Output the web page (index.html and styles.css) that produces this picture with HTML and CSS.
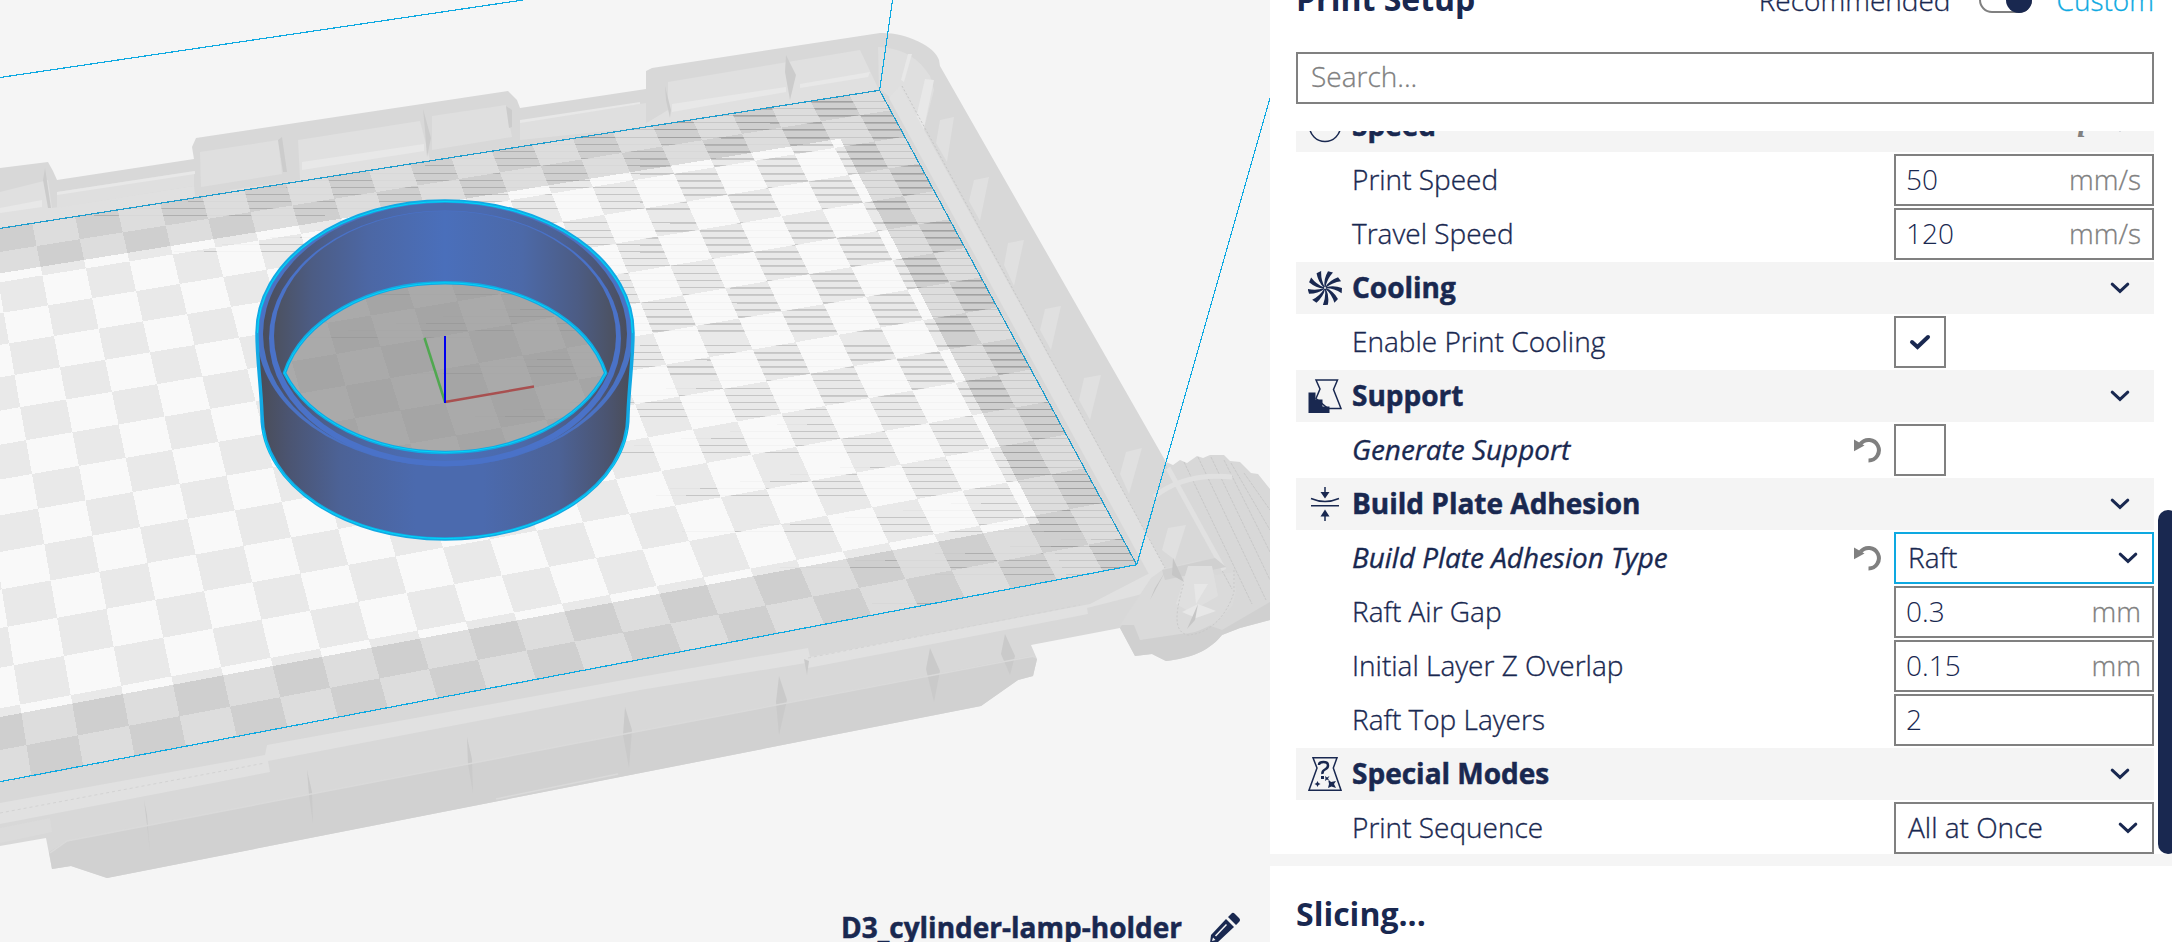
FILE: index.html
```html
<!DOCTYPE html>
<html lang="en">
<head>
<meta charset="utf-8">
<title>Print Setup</title>
<link rel="stylesheet" href="styles.css">
</head>
<body>
<svg class="defs" width="0" height="0" aria-hidden="true">
  <symbol id="chevron" viewBox="0 0 20 12"><path d="M2.2 2.2 10 9.4 17.8 2.2" fill="none" stroke="#192850" stroke-width="3" stroke-linecap="round"/></symbol>
  <symbol id="reset" viewBox="0 0 28 28"><path d="M6.5 7.8A10.3 10.3 0 1 1 14.5 24.5" fill="none" stroke="#808080" stroke-width="4"/><path d="M0 3.5 10.5 9.5 0 15.2Z" fill="#808080"/></symbol>
</svg>
<div class="app">
  <main class="stage">
    <svg class="scene" width="1270" height="942" viewBox="0 0 1270 942">
      <defs>
        <linearGradient id="outer" x1="257" x2="634" y1="0" y2="0" gradientUnits="userSpaceOnUse">
          <stop offset="0" stop-color="#4a4c55"/><stop offset=".08" stop-color="#4b5470"/><stop offset=".22" stop-color="#4c6296"/><stop offset=".42" stop-color="#4b6aae"/><stop offset=".6" stop-color="#4b6aae"/><stop offset=".8" stop-color="#4c6296"/><stop offset=".93" stop-color="#4b5470"/><stop offset="1" stop-color="#4a4c55"/>
        </linearGradient>
        <linearGradient id="inner" x1="270" x2="620" y1="0" y2="0" gradientUnits="userSpaceOnUse">
          <stop offset="0" stop-color="#4c505c"/><stop offset=".12" stop-color="#4c5c84"/><stop offset=".28" stop-color="#4c67a4"/><stop offset=".5" stop-color="#4a6fbb"/><stop offset=".72" stop-color="#4c69a8"/><stop offset=".88" stop-color="#4c5c84"/><stop offset="1" stop-color="#4c505c"/>
        </linearGradient>
        <clipPath id="plate"><path d="M-60 238 879.6 90.3 1136.7 564.7-60 794.5Z"/></clipPath>
        <clipPath id="darkCells"><path id="darkClip"/></clipPath>
        <clipPath id="ringHole"><path clip-rule="evenodd" d="M0 0H1270V942H0ZM284.500 373A165 117 0 0 1 605.700 373A171 121 0 0 1 284.500 373Z"/></clipPath>
      </defs>
      <g id="frame">
        <path fill="#d8d8d8" d="M0 168 48 162 53 171 57 180 194 159 192 147 196 138 508 91 517 100 520 108 646 89 646 71 652 68 880 33C905 32 935 46 939 60L940 66 1166 462 1173 465 1180 460 1187 463 1197 456 1203 458 1210 455 1224 455 1230 461 1240 462 1251 473 1258 474 1270 489V620L1240 628 1222 635C1208 652 1190 658 1166 661L1152 654 1135 656 1120 628 1031 645 1037 659 1033 676 1018 680 981 706 107 878 71 866 52 869 46 838 0 846Z"/>
        <path fill="#e0e0e0" d="M0 192 48 180 52 208 194 186 196 205 230 199 230 190 300 180 298 140 420 121 430 160 520 146 640 127 668 110 668 82 860 50 879 90 0 228Z"/>
        <path fill="#dfdfdf" d="M200 152 278 140 282 174 201 187ZM432 116 506 105 512 137 432 150ZM57 192 194 171V186L57 208ZM520 122 646 103V127L520 140Z"/>
        <path fill="#cccccc" d="M278 140 283 172 287 172 282 137ZM423 109 431 138 427 157 425 130ZM506 106 509 128 512 127 512 110ZM45 168 51 208 48 208 43 180ZM786 55 796 75 790 100 785 72ZM665 86 671 110 670 118 666 100Z"/>
        <path fill="#e8e8e8" d="M0 213 42 207V200L0 208ZM57 192 195 171V174L57 195ZM302 162 424 144V151L302 170ZM520 120 640 102V104L520 123ZM672 104 786 87V92L672 112ZM800 84 870 72 868 77 800 88Z"/>
        <path fill="#dfdfdf" d="M878 47C905 48 920 60 930 76L934 90 921 140 905 110 879 88Z"/>
        <path fill="#e8e8e8" d="M925 79 934 80 921 142 912 135ZM908 54 901 80 904 82 912 54Z"/>
        <path fill="#e1e1e1" d="M889 98 900 86 1165 568 1151 578Z"/>
        <path fill="none" stroke="#c6c6c6" stroke-dasharray="2 2" d="M902 86 1165 568"/>
        <g fill="#e0e0e0"><path d="M940 120 954 117 947 162 936 143Z"/><path d="M974 180 989 177 980 221 969 201Z"/><path d="M1008 243 1024 240 1014 286 1004 265Z"/><path d="M1045 309 1061 306 1051 350 1040 330Z"/><path d="M1084 378 1101 375 1090 420 1079 400Z"/><path d="M1126 452 1142 448 1129 494 1120 474Z"/><path d="M1168 528 1186 525 1175 560 1162 550Z"/></g>
        <path fill="#d1d1d1" d="M67 841 640 731 1030 656 1037 659 1033 676 1018 680 981 706 107 878 71 866 52 869 49 852Z"/>
        <path fill="#e1e1e1" d="M0 803 265 755 267 745 640 677 808 648 810 657 1090 604 1148 574 1164 568 1150 592 1087 608 1088 614 808 668 806 663 640 690 268 761 270 772 0 824Z"/>
        <path fill="#dbdbdb" d="M0 843V828L50 818 52 832Z"/>
        <path fill="none" stroke="#d3d3d3" stroke-dasharray="3 3" d="M0 813 265 763M808 658 1080 605"/>
        <path fill="#cacaca" d="M307 770 312 792 313 824 309 795ZM467 737 472 759 473 793 468 764ZM625 707 632 730 629 768 623 735ZM779 676 787 700 779 735 776 702ZM930 648 940 671 934 702 926 669ZM1005 634 1015 656 1010 675 1001 654ZM144 800 147 815 150 852 147 825ZM804 659 809 661 807 675Z"/>
        <path fill="none" stroke="#dadada" stroke-width="1.500" d="M496 799 618 774M50 853 67 841 640 731 1034 656"/>
        <path fill="#d0d0d0" d="M1132 610 1140 640 1200 622 1222 630 1270 602V620L1240 628 1222 635C1208 652 1190 658 1166 661L1152 654 1135 656 1120 628Z"/>
        <path fill="#dadada" d="M1151 578 1165 568 1200 560 1215 575 1234 572 1236 590 1232 606C1220 622 1200 634 1180 634L1140 640 1134 625 1120 625Z"/>
        <path fill="none" stroke="#c8c8c8" stroke-dasharray="3 1" d="M1165 465 1232 589M1184 462 1252 604M1198 457 1266 600M1211 457 1270 580M1224 460 1270 552M1231 463 1270 530M1244 473 1270 510"/>
        <path fill="none" stroke="#e1e1e1" stroke-width="5" d="M1168 468 1224 570M1154 497C1175 480 1200 474 1232 477"/>
        <path fill="#d0d0d0" d="M1162 570 1215 558 1226 567 1165 580Z"/>
        <path fill="#dfdfdf" d="M1176 604 1188 566 1212 566 1218 596 1190 612Z"/>
        <path fill="#e7e7e7" d="M1194 584 1208 584 1196 604ZM1182 612 1198 604 1216 611 1196 618Z"/>
        <path fill="#c6c6c6" d="M1165 572 1150 600 1155 588ZM1173 558 1184 582 1172 575ZM1198 604 1195 620 1187 629Z"/>
        <path fill="none" stroke="#c9c9c9" stroke-dasharray="2 2" d="M1234 570V592C1226 618 1208 634 1188 635 1172 632 1176 610 1184 582"/>
      </g>
      <g clip-path="url(#plate)" shape-rendering="crispEdges">
        <path fill="#f9f9f9" d="M-60 238 879.6 90.3 1136.7 564.7-60 794.5Z"/>
        <path id="cells" fill="#e9e9e9"/>
        <path id="faint" fill="#000" fill-opacity=".025"/>
        <path id="streaks" fill="#000" fill-opacity=".13" clip-path="url(#darkCells)"/>
        <path id="border" fill="#000" fill-opacity=".108" fill-rule="evenodd"/>
        <path id="borderStreaks" fill="#000" fill-opacity=".08"/>
      </g>
      <path fill="#8a8a8a" fill-opacity=".72" d="M284.500 373A165 117 0 0 1 605.700 373A171 121 0 0 1 284.500 373Z"/>
      <g fill="none" stroke="#0ea9e1" stroke-width="1.2" shape-rendering="crispEdges">
        <path stroke="#209dcd" d="M0 228.4 879.6 90.3 1136.7 564.7"/>
        <path d="M0 781.7 1136.7 564.7 1270 98M0 77.5 523 0M879.6 90.3 892.5 0"/>
      </g>
      <g clip-path="url(#ringHole)">
        <path fill="url(#outer)" d="M257 333C257 360 261 385 262 415 262 485 345 540 445 540S628 485 628 415C629 385 633 360 633 333Z"/>
        <ellipse cx="445" cy="333" rx="188" ry="133" fill="#4a72c4"/>
        <ellipse cx="445" cy="334" rx="182" ry="131" fill="url(#outer)"/>
        <ellipse cx="445" cy="338.500" rx="176" ry="128" fill="#4a72c8"/>
        <ellipse cx="445" cy="336" rx="171" ry="125" fill="url(#inner)"/>
        <path fill="none" stroke="#12a9e4" stroke-width="3.5" d="M257 333A188 132 0 0 1 633 333C633 360 629 385 628 415 628 485 545 539 445 539S262 485 262 415C261 385 257 360 257 333Z"/>
        <path fill="none" stroke="#00d8fa" stroke-width="1" d="M257.500 333A187.500 131.500 0 0 1 632.500 333M263 430C272 490 350 538.500 445 538.500S618 490 627 430"/>
      </g>
      <path fill="none" stroke="#12a9e4" stroke-width="3.5" d="M284.500 373A165 117 0 0 1 605.700 373A171 121 0 0 1 284.500 373Z"/>
      <path fill="none" stroke="#00d8fa" stroke-width="1" d="M284.500 373A165 117 0 0 1 605.700 373A171 121 0 0 1 284.500 373Z"/>
      <g fill="none" stroke-width="2.500"><path stroke="#a85050" d="M445 402 534 386.500"/><path stroke="#50a850" d="M445 402 424.500 338"/><path stroke="#0000f0" stroke-width="2" d="M445 403V336"/></g>
    </svg>
    <div class="job">
      <span class="job-name">D3_cylinder-lamp-holder</span>
      <svg width="32" height="32" viewBox="0 0 32 32"><path fill="#192850" d="M1 31 2 23 17 7 25 15 9 30ZM19 5 22.500 1.500Q24 0 26 2L30 6Q32 8 30 10L27 13Z"/><path d="M6.500 24 17.500 12.500" stroke="#f5f5f5" stroke-width="1.500"/><path fill="#f5f5f5" d="M3 29 4 25.500 6.500 28Z"/></svg>
    </div>
  </main>
  <aside class="panel">
    <section class="setup">
      <header class="setup-head">
        <h2 class="setup-title">Print Setup</h2>
        <span class="mode">Recommended</span>
        <span class="switch"><i class="knob"></i></span>
        <span class="mode mode-on">Custom</span>
      </header>
      <div class="search">Search...</div>
      <div class="list">
        <div class="rows">
          <div class="group"><svg class="gicon" viewBox="0 0 34 34"><circle cx="17" cy="17" r="15.500" fill="none" stroke="#192850" stroke-width="1.500"/></svg><b>Speed</b><i class="info">i</i><svg class="chev"><use href="#chevron"/></svg></div>
          <div class="row"><span class="label">Print Speed</span><div class="field"><span>50</span><em>mm/s</em></div></div>
          <div class="row"><span class="label">Travel Speed</span><div class="field"><span>120</span><em>mm/s</em></div></div>
          <div class="group"><svg class="gicon" viewBox="0 0 34 34"><g id="fan" fill="#192850"></g></svg><b>Cooling</b><svg class="chev"><use href="#chevron"/></svg></div>
          <div class="row"><span class="label">Enable Print Cooling</span><div class="check"><svg width="22" height="18" viewBox="0 0 22 18"><path d="M3 9 8.500 14 19 4" fill="none" stroke="#192850" stroke-width="4" stroke-linecap="round"/></svg></div></div>
          <div class="group"><svg class="gicon" viewBox="0 0 34 34"><path d="M8 1H29.500L25.500 10.500 33 29.500H20L8 19.500 12 10Z" fill="none" stroke="#192850" stroke-width="1.500"/><path fill="#192850" d="M.5 13.500H7.500V20.500H14.500V27.500H21.500V34H.5Z"/></svg><b>Support</b><svg class="chev"><use href="#chevron"/></svg></div>
          <div class="row"><span class="label changed">Generate Support</span><svg class="reset"><use href="#reset"/></svg><div class="check"></div></div>
          <div class="group"><svg class="gicon" viewBox="0 0 34 34"><g fill="none" stroke="#192850" stroke-width="1.500"><path d="M17 0V8M17 34V26M3 18.700H31M3 11.500Q17 17.500 31 11.500"/></g><path fill="#192850" d="M12.500 5H21.500L17 11.500ZM12.500 29.500H21.500L17 22.500Z"/></svg><b>Build Plate Adhesion</b><svg class="chev"><use href="#chevron"/></svg></div>
          <div class="row"><span class="label changed">Build Plate Adhesion Type</span><svg class="reset"><use href="#reset"/></svg><div class="field pick active"><span>Raft</span><svg class="chev"><use href="#chevron"/></svg></div></div>
          <div class="row"><span class="label">Raft Air Gap</span><div class="field"><span>0.3</span><em>mm</em></div></div>
          <div class="row"><span class="label">Initial Layer Z Overlap</span><div class="field"><span>0.15</span><em>mm</em></div></div>
          <div class="row"><span class="label">Raft Top Layers</span><div class="field"><span>2</span></div></div>
          <div class="group"><svg class="gicon" viewBox="0 0 34 34"><g fill="none" stroke="#192850"><path stroke-width="1.500" d="M5 .8H29L25.300 11 33 33.200H1L9 11Z"/><path stroke-width="2.500" d="M11 8Q11 5 15.500 5T20 8.500Q20 11 17 12.500T14.500 17"/></g><path fill="#192850" d="M13 19H16V22H13ZM17 19 19 20.500 21.500 19 20 21.500 21.500 24 19 22.500 17 24 17.500 21.500ZM9.500 24 10.500 26 12.500 27 10.500 28 9.500 30 8.500 28 6.500 27 8.500 26ZM20 22 23 25 28 24 26 27 28 31 23.500 29.500 20 31 21 27Z"/></svg><b>Special Modes</b><svg class="chev"><use href="#chevron"/></svg></div>
          <div class="row"><span class="label">Print Sequence</span><div class="field pick"><span>All at Once</span><svg class="chev"><use href="#chevron"/></svg></div></div>
        </div>
        <div class="scrollbar"></div>
      </div>
    </section>
    <section class="action">Slicing...</section>
  </aside>
</div>
<script src="scene.js"></script>
</body>
</html>
```

FILE: styles.css
```css
* { box-sizing: border-box; }
body { margin: 0; width: 2172px; height: 942px; overflow: hidden; background: #f5f5f5; color: #192850; font: 300 28px "Open Sans", "Noto Sans", sans-serif; }
.defs { position: absolute; }
.app { display: flex; height: 942px; }
.stage { position: relative; width: 1270px; height: 942px; overflow: hidden; flex: none; }
.scene { display: block; }
.job { position: absolute; right: 29px; top: 907px; display: flex; gap: 27px; align-items: flex-start; line-height: 40px; }
.job svg { margin-top: 5px; }
.job-name { font-size: 28px; font-weight: 700; -webkit-text-stroke: .5px #192850; }
.panel { width: 902px; display: flex; flex-direction: column; gap: 12px; overflow: hidden; }
.setup { height: 854px; background: #fff; padding-left: 26px; overflow: hidden; }
.setup-head { display: flex; align-items: center; width: 858px; height: 44px; margin-top: -22px; line-height: 44px; }
.setup-title { margin: 0 auto 0 0; font-size: 32px; font-weight: 700; line-height: 40px; padding-bottom: 3px; }
.mode { -webkit-text-stroke: .3px; }
.switch { display: flex; justify-content: flex-end; width: 53px; height: 26px; margin: 0 25px 0 28px; border: 2px solid #808080; border-radius: 13px; background: #fff; }
.knob { width: 26px; height: 26px; margin: -2px; border-radius: 50%; background: #192850; }
.mode-on { color: #0ea9e1; }
.search { width: 858px; height: 52px; margin-top: 30px; padding-left: 13px; border: 2px solid #808080; line-height: 45px; color: #808080; -webkit-text-stroke: .3px; }
.list { position: relative; height: 723px; margin-top: 27px; overflow: hidden; display: flex; gap: 4px; align-items: flex-start; }
.rows { display: grid; gap: 2px; width: 858px; flex: none; margin-top: -31px; }
.group, .row { display: flex; align-items: center; height: 52px; }
.group { background: #f4f4f4; padding: 0 24px 0 12px; }
.group b { margin: 0 auto 0 10px; padding-bottom: 2px; font-size: 28px; font-weight: 700; -webkit-text-stroke: .5px #192850; }
.gicon { width: 34px; height: 34px; }
.chev { width: 20px; height: 12px; }
.info { margin-right: 24px; color: #808080; font: italic 700 32px "Liberation Serif", serif; }
.label { padding: 0 0 2px 56px; margin-right: auto; -webkit-text-stroke: .35px; }
.changed { font-size: 27.9px; font-style: italic; font-weight: 500; }
.reset { width: 28px; height: 28px; margin-right: 12px; }
.field { display: flex; justify-content: space-between; align-items: center; width: 260px; height: 52px; padding: 0 11px 0 10px; border: 2px solid #808080; background: #fff; line-height: 44px; }
.field span, .field em { padding-bottom: 2px; }
.field em { font-style: normal; color: #808080; -webkit-text-stroke: .3px; }
.pick { padding: 0 14px 0 12px; -webkit-text-stroke: .35px; }
.active { border-color: #0ea9e1; }
.check { display: flex; align-items: center; justify-content: center; width: 52px; height: 52px; margin-right: 208px; border: 2px solid #808080; }
.scrollbar { width: 20px; height: 344px; flex: none; margin-top: 379px; border-radius: 10px; background: #192850; }
.action { height: 76px; background: #fff; padding: 26px 0 0 26px; font-size: 32px; font-weight: 700; line-height: 44px; }
```

FILE: scene.js
```js
// Grid corners of the build plate: column, row, screen x, screen y.
const anchors = [
  [0, 1, 8.2, 626.7], [13, 1, 629.4, 513.7], [0, 0, 2, 589.3], [7, 0, 338.8, 529.3],
  [14, 4, 717.7, 614.7], [18, 4, 905.3, 579], [22, 4, 1088.7, 544.3], [0, 4, 25.7, 745.3],
  [2, -10, 36.7, 246], [6, -10, 208.3, 218.7], [2, -8, 47.7, 305.3], [6, -8, 223, 277.3],
  [18, -10, 701.2, 139.3], [20, -10, 781.6, 127.7], [22, -10, 860.8, 116], [1, -4, 26.1, 440]
];

// Least-squares homography through normal equations.
const M = Array.from({ length: 8 }, () => new Array(9).fill(0));
function addRow(r) {
  for (let a = 0; a < 8; a++) for (let b = 0; b < 9; b++) M[a][b] += r[a] * r[b];
}
for (const [u, v, x, y] of anchors) {
  addRow([u, v, 1, 0, 0, 0, -u * x, -v * x, x]);
  addRow([0, 0, 0, u, v, 1, -u * y, -v * y, y]);
}
for (let c = 0; c < 8; c++) {
  let p = c;
  for (let r = c; r < 8; r++) if (Math.abs(M[r][c]) > Math.abs(M[p][c])) p = r;
  [M[c], M[p]] = [M[p], M[c]];
  for (let r = 0; r < 8; r++) {
    if (r === c) continue;
    const f = M[r][c] / M[c][c];
    for (let k = c; k < 9; k++) M[r][k] -= f * M[c][k];
  }
}
const h = M.map((r, i) => r[8] / r[i]);
function pt(u, v) {
  const w = h[6] * u + h[7] * v + 1;
  return ((h[0] * u + h[1] * v + h[2]) / w).toFixed(1) + " " + ((h[3] * u + h[4] * v + h[5]) / w).toFixed(1);
}
const quad = (a, b, c, d) => `M${pt(a, b)}L${pt(c, b)}L${pt(c, d)}L${pt(a, d)}Z`;
const set = (id, d) => document.getElementById(id).setAttribute("d", d);

let cells = "";
for (let i = -2; i < 24; i++)
  for (let j = -12; j < 6; j++)
    if ((i + j) % 2 === 0) cells += quad(i, j, i + 1, j + 1);
set("cells", cells);
set("darkClip", cells);
set("border", quad(-3, -11, 23, 5) + quad(-4, -9.29, 21.24, 3.21));

// Horizontal streaks over the plate: y, left end, optional right end.
const lines = [
  [101, 500], [108, 500], [115, 500], [122, 600], [129, 600], [137, 551], [144, 535], [151, 500], [158, 460], [165, 425], [173, 375],
  [180, 328], [187, 286], [194, 235], [201, 188], [208, 141], [215, 94, 325], [222, 500], [230, 347], [237, 300],
  [244, 252], [251, 204], [258, 580], [265, 570], [273, 560], [280, 560], [287, 560], [294, 360], [302, 567],
  [309, 520], [316, 473], [323, 426], [330, 378], [337, 331, 470], [345, 640], [352, 583], [359, 537], [366, 490],
  [373, 443], [380, 740], [388, 696], [395, 650], [402, 600], [409, 553], [416, 505], [424, 807], [431, 760],
  [438, 711], [445, 664], [452, 612], [460, 946], [467, 870], [474, 820], [481, 770], [488, 700], [495, 686],
  [503, 981], [510, 933], [517, 875], [524, 790], [531, 712], [539, 1091], [546, 1040], [553, 965], [560, 885],
  [567, 810], [574, 965], [603, 902, 930]
];
// Right boundary of the printable area; beyond it the streaks cross every cell.
const [ax, ay] = pt(21.24, -9.29).split(" ").map(Number);
const [bx, by] = pt(21.24, 3.21).split(" ").map(Number);
let strong = "", faint = "", margin = "";
for (const [y, x, end = 1140] of lines) {
  strong += `M${x} ${y}H${end}v1H${x}Z`;
  faint += `M${x - 30} ${y}H${end}v1H${x - 30}Z`;
  if (end !== 1140) continue;
  const wide = Math.max(x + 170, 640);
  if (y < 400) strong += `M${wide} ${y + 1}H1140v1H${wide}Z`;
  const left = Math.max(x, y < ay ? x : ax + (bx - ax) * (y - ay) / (by - ay)).toFixed(0);
  margin += `M${left} ${y}H1140v1H${left}Z`;
}
set("streaks", strong);
set("faint", faint);
set("borderStreaks", margin);

// Fan blades of the cooling icon.
let blades = "";
for (let a = 0; a < 360; a += 40)
  blades += `<path transform="rotate(${a} 17 17)" d="M16.500 16Q15.500 8 20 .3L25 1.500Q19 8 17.500 16Z"/>`;
document.getElementById("fan").innerHTML = blades;
```
